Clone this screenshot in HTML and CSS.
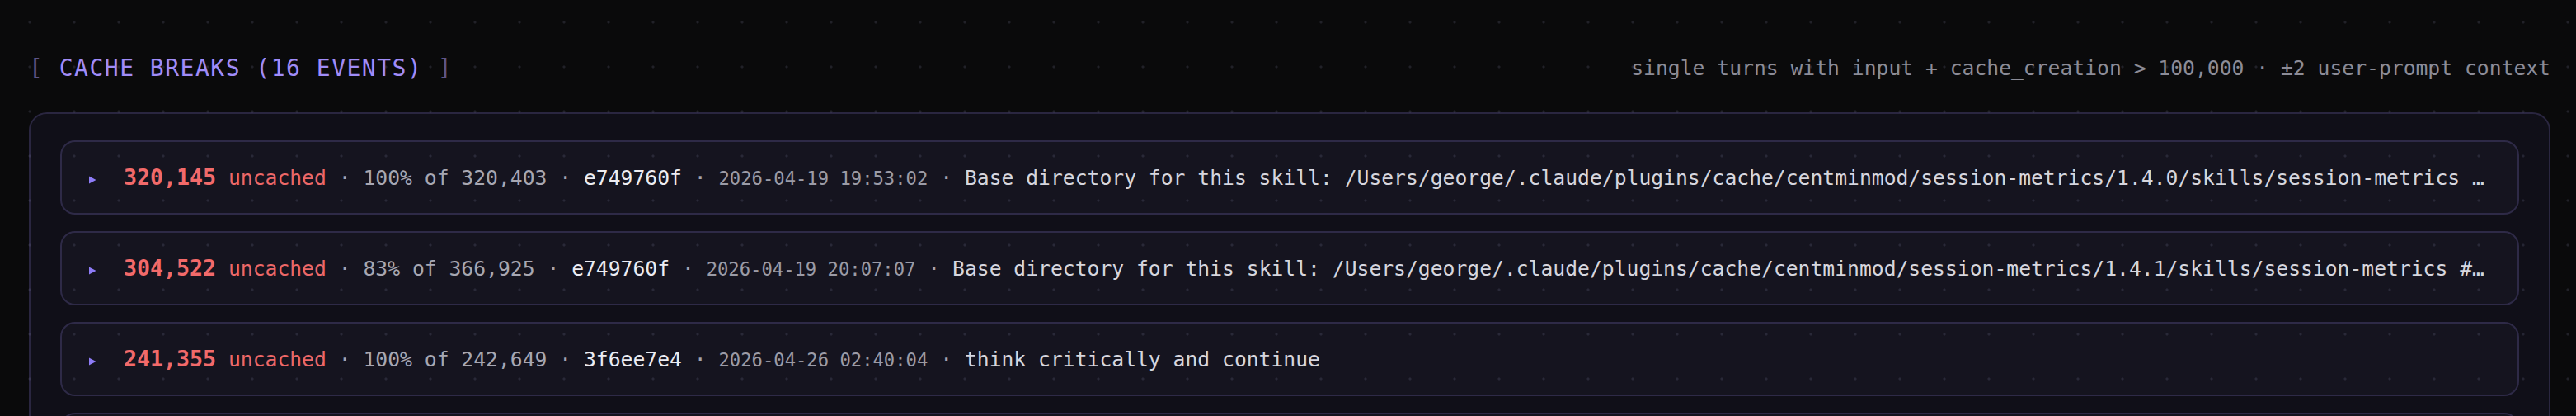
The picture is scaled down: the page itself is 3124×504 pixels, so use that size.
FILE: index.html
```html
<!DOCTYPE html>
<html lang="en">
<head>
<meta charset="utf-8">
<title>Cache breaks</title>
<link rel="stylesheet" href="styles.css">
</head>
<body>
<section class="cache-breaks">
  <header class="section-head">
    <h2 class="section-title"><span class="bracket">[</span> CACHE BREAKS (16 EVENTS) <span class="bracket">]</span></h2>
    <p class="section-note">single turns with input + cache_creation &gt; 100,000 · ±2 user-prompt context</p>
  </header>
  <div class="panel">
    <div class="break">
      <svg class="caret" width="9" height="10" viewBox="0 0 9 10"><polygon points="0,0.5 8.5,5 0,9.5"/></svg>
      <div class="line"><span class="num">320,145</span><span class="red"> uncached</span><span class="sep"> · </span><span class="muted">100% of 320,403</span><span class="sep"> · </span><span class="hash">e749760f</span><span class="sep"> · </span><span class="date">2026-04-19 19:53:02</span><span class="sep"> · </span><span class="prompt">Base directory for this skill: /Users/george/.claude/plugins/cache/centminmod/session-metrics/1.4.0/skills/session-metrics # Session Metrics Analyse token usage and cache efficiency for the current session</span></div>
    </div>
    <div class="break">
      <svg class="caret" width="9" height="10" viewBox="0 0 9 10"><polygon points="0,0.5 8.5,5 0,9.5"/></svg>
      <div class="line"><span class="num">304,522</span><span class="red"> uncached</span><span class="sep"> · </span><span class="muted">83% of 366,925</span><span class="sep"> · </span><span class="hash">e749760f</span><span class="sep"> · </span><span class="date">2026-04-19 20:07:07</span><span class="sep"> · </span><span class="prompt">Base directory for this skill: /Users/george/.claude/plugins/cache/centminmod/session-metrics/1.4.1/skills/session-metrics # Session Metrics Analyse token usage and cache efficiency for the current session</span></div>
    </div>
    <div class="break">
      <svg class="caret" width="9" height="10" viewBox="0 0 9 10"><polygon points="0,0.5 8.5,5 0,9.5"/></svg>
      <div class="line"><span class="num">241,355</span><span class="red"> uncached</span><span class="sep"> · </span><span class="muted">100% of 242,649</span><span class="sep"> · </span><span class="hash">3f6ee7e4</span><span class="sep"> · </span><span class="date">2026-04-26 02:40:04</span><span class="sep"> · </span><span class="prompt">think critically and continue</span></div>
    </div>
    <div class="break">
      <svg class="caret" width="9" height="10" viewBox="0 0 9 10"><polygon points="0,0.5 8.5,5 0,9.5"/></svg>
      <div class="line"><span class="num">228,917</span><span class="red"> uncached</span><span class="sep"> · </span><span class="muted">100% of 229,804</span><span class="sep"> · </span><span class="hash">3f6ee7e4</span><span class="sep"> · </span><span class="date">2026-04-26 03:12:45</span><span class="sep"> · </span><span class="prompt">continue</span></div>
    </div>
  </div>
</section>
</body>
</html>
```

FILE: styles.css
```css
html {
  background: #0a0a0b;
}

body {
  margin: 0;
  padding: 66px 31px 0 35px;
  background: #0a0a0b;
  color: #d4d4dc;
  font-family: "DejaVu Sans Mono", "Liberation Mono", monospace;
  font-size: 24.7px;
  overflow: hidden;
  height: 504px;
  box-sizing: border-box;
}

body::after {
  content: "";
  position: fixed;
  inset: 0;
  pointer-events: none;
  background-image: radial-gradient(circle at center, rgba(125, 125, 160, 0.2) 0, rgba(125, 125, 160, 0.2) 1.2px, transparent 1.9px);
  background-size: 54px 54px;
  background-position: 9px 0;
}

.section-head {
  display: flex;
  justify-content: space-between;
  align-items: center;
  height: 34px;
  margin-bottom: 36px;
}

.section-title {
  margin: 0;
  font-size: 28px;
  font-weight: normal;
  letter-spacing: 1.5px;
  color: #a08cf8;
  line-height: 34px;
  white-space: nowrap;
}

.bracket {
  color: #5e5589;
}

.section-note {
  margin: 0;
  color: #8c8c97;
  line-height: 34px;
  white-space: nowrap;
}

.panel {
  border: 2px solid #2a2640;
  border-radius: 22px;
  background: #100f18;
  padding: 32px 36px;
  display: flex;
  flex-direction: column;
  gap: 20px;
}

.break {
  display: flex;
  align-items: center;
  border: 2px solid #2e2a47;
  border-radius: 18px;
  background: #15141f;
  padding: 28px 38px 28px 33px;
  height: 90px;
  box-sizing: border-box;
}

.caret {
  flex: none;
  fill: #8e7cf7;
  margin: 6px 33px 0 0;
}

.line {
  flex: 1;
  min-width: 0;
  white-space: nowrap;
  overflow: hidden;
  text-overflow: ellipsis;
  line-height: 34px;
}

.num {
  font-size: 26.6px;
  font-weight: bold;
  color: #f26a6a;
}

.red {
  color: #ec6868;
}

.sep {
  color: #a3a3ad;
}

.muted {
  color: #a7a7b2;
}

.hash {
  color: #ececf2;
}

.date {
  font-size: 22.2px;
  color: #9b9ba6;
}

.prompt {
  color: #d6d6de;
}
```
